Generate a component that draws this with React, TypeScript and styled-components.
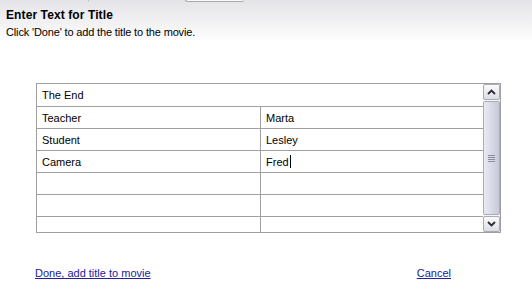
import styled, { createGlobalStyle } from 'styled-components';

const GlobalStyle = createGlobalStyle`
    html, body {
        margin: 0;
        padding: 0;
        background: #ffffff;
    }
`;

const Page = styled.div`
    width: 532px;
    height: 305px;
    display: flex;
    flex-direction: column;
    background: #ffffff;
    overflow: hidden;
    font-family: 'Liberation Sans', Arial, sans-serif;
`;

const Header = styled.div`
    height: 42px;
    box-sizing: border-box;
    padding: 6px 6px 0;
    display: flex;
    flex-direction: column;
    background: linear-gradient(#e4e4e8 0%, #ececef 30%, #f7f7f8 75%, #ffffff 100%);
`;

const TopStrip = styled.div`
    height: 3px;
    margin: -6px -6px 5px;
    display: flex;
`;

const TabEdge = styled.div<{ $width: number; $closed?: boolean }>`
    width: ${(p) => p.$width}px;
    height: 2px;
    box-sizing: border-box;
    border-right: 1px solid #b8b8bc;
    border-bottom: ${(p) => (p.$closed ? '1px solid #a8a8ac' : 'none')};
    border-left: ${(p) => (p.$closed ? '1px solid #a8a8ac' : 'none')};
    border-radius: 0 0 3px 3px;
    background: ${(p) => (p.$closed ? '#fafafa' : 'transparent')};
`;

const Title = styled.div`
    color: #000;
    font-size: 12px;
    font-weight: 700;
    line-height: 15px;
    letter-spacing: 0.1px;
`;

const SubTitle = styled.div`
    margin-top: 2px;
    color: #000;
    font-size: 11px;
    line-height: 14px;
    letter-spacing: -0.15px;
`;

const GridWrap = styled.div`
    margin: 41px 0 0 36px;
    width: 465px;
    height: 150px;
    box-sizing: border-box;
    border: 1px solid #a0a0a0;
    display: flex;
    background: #fff;
`;

const Rows = styled.div`
    flex: 1;
    display: flex;
    flex-direction: column;
`;

const FullRow = styled.div`
    height: 22px;
    border-bottom: 1px solid #a0a0a0;
    padding-left: 5px;
    display: flex;
    align-items: center;
    font-size: 11px;
    color: #000;
`;

const Row = styled.div`
    height: 21px;
    flex-shrink: 0;
    border-bottom: 1px solid #a0a0a0;
    display: grid;
    grid-template-columns: 224px 1fr;
`;

const LastRow = styled(Row)`
    height: 15px;
    border-bottom: none;
`;

const Cell = styled.div<{ $divider?: boolean }>`
    padding-left: 5px;
    display: flex;
    align-items: center;
    font-size: 11px;
    color: #000;
    border-right: ${(p) => (p.$divider ? '1px solid #a0a0a0' : 'none')};
`;

const Caret = styled.span`
    display: inline-block;
    width: 1px;
    height: 13px;
    margin-left: 1px;
    background: #000;
`;

const ScrollBar = styled.div`
    width: 17px;
    display: flex;
    flex-direction: column;
    background: #f4f4f6;
`;

const ScrollButton = styled.div`
    height: 16px;
    box-sizing: border-box;
    border: 1px solid #a8acb4;
    border-radius: 2px;
    background: linear-gradient(#fbfbfc, #dcdde4);
    display: flex;
    align-items: center;
    justify-content: center;
`;

const Thumb = styled.div`
    flex: 1;
    margin: 1px 0;
    box-sizing: border-box;
    border: 1px solid #a8acbc;
    border-radius: 2px;
    background: linear-gradient(90deg, #eaeaf2, #d4d6e4 60%, #c8cadb);
    display: flex;
    align-items: center;
    justify-content: center;
`;

const Footer = styled.div`
    margin-top: 34px;
    padding: 0 81px 0 35px;
    display: flex;
    justify-content: space-between;
`;

const LinkText = styled.a`
    color: #2020a0;
    font-size: 11px;
    text-decoration: underline;
    cursor: pointer;
`;

const Chevron = ({ up }: { up?: boolean }) => (
    <svg width="9" height="6" viewBox="0 0 9 6">
        <path
            d={up ? 'M1 5 L4.5 1.5 L8 5' : 'M1 1 L4.5 4.5 L8 1'}
            fill="none"
            stroke="#2a2a33"
            strokeWidth="1.8"
        />
    </svg>
);

const Grip = () => (
    <svg width="7" height="7" viewBox="0 0 7 7">
        <path d="M0 0.5 H7 M0 2.5 H7 M0 4.5 H7 M0 6.5 H7" stroke="#8a8ca0" strokeWidth="1" />
    </svg>
);

const rows = [
    { role: 'Teacher', name: 'Marta' },
    { role: 'Student', name: 'Lesley' },
    { role: 'Camera', name: 'Fred', editing: true },
    { role: '', name: '' },
    { role: '', name: '' }
];

const App = () => {
    return (
        <Page>
            <GlobalStyle />
            <Header>
                <TopStrip>
                    <TabEdge $width={89} />
                    <TabEdge $width={97} />
                    <TabEdge $width={58} $closed />
                </TopStrip>
                <Title>Enter Text for Title</Title>
                <SubTitle>Click 'Done' to add the title to the movie.</SubTitle>
            </Header>
            <GridWrap>
                <Rows>
                    <FullRow>The End</FullRow>
                    {rows.map((row, index) => (
                        <Row key={index}>
                            <Cell $divider>{row.role}</Cell>
                            <Cell>
                                {row.name}
                                {row.editing && <Caret />}
                            </Cell>
                        </Row>
                    ))}
                    <LastRow>
                        <Cell $divider />
                        <Cell />
                    </LastRow>
                </Rows>
                <ScrollBar>
                    <ScrollButton>
                        <Chevron up />
                    </ScrollButton>
                    <Thumb>
                        <Grip />
                    </Thumb>
                    <ScrollButton>
                        <Chevron />
                    </ScrollButton>
                </ScrollBar>
            </GridWrap>
            <Footer>
                <LinkText>Done, add title to movie</LinkText>
                <LinkText>Cancel</LinkText>
            </Footer>
        </Page>
    );
};

export default App;
